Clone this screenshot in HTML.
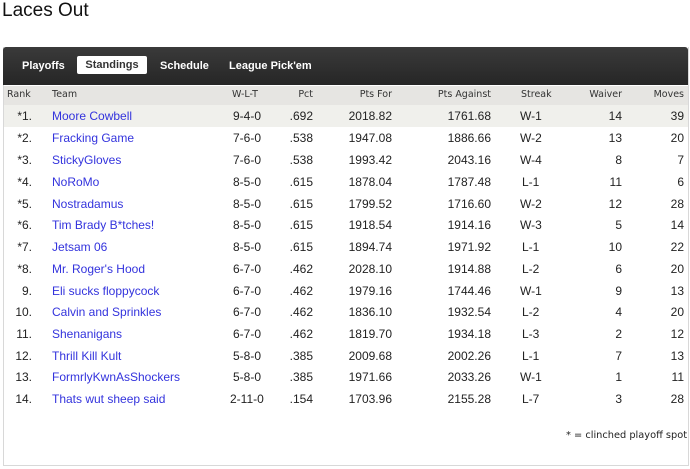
<!DOCTYPE html>
<html><head><style>
body{margin:0;width:690px;height:469px;background:#fff;font-family:"Liberation Sans",Arial,sans-serif;position:relative;overflow:hidden}
.t{position:absolute;left:2px;top:0px;font-size:19px;color:#111}
.box{position:absolute;left:3px;top:47px;width:684px;height:418px;border:1px solid #d8d8d8;border-top:none}
.nav{position:absolute;left:3px;top:47px;width:685px;height:38px;background:linear-gradient(#3a3a3a,#262626);border-radius:3px 3px 0 0}
.nav span{position:absolute;top:13px;color:#fff;font-weight:bold;font-size:11px;font-family:"Liberation Sans",Arial,sans-serif}
.nav .on{background:#fff;color:#333;top:9px;padding:3px 0;width:70px;text-align:center;border-radius:2px}
.hdr{position:absolute;left:4px;top:86px;width:684px;height:19px;background:#e6e5e2;border-bottom:1px solid #ccc}
.row{position:absolute;left:4px;width:684px;height:21px;font-size:12px;color:#222}
.c{position:absolute;top:4px;white-space:nowrap}
.hdr .c{font-family:"DejaVu Sans",Verdana,sans-serif;font-size:9.5px;color:#333;top:3px}
a{color:#3333dd;text-decoration:none}
.foot{position:absolute;left:566px;top:430px;font-family:"DejaVu Sans",Verdana,sans-serif;font-size:9.8px;color:#222;white-space:nowrap}
</style></head><body>
<div class="t">Laces Out</div>
<div class="box"></div>
<div class="nav">
<span style="left:19px">Playoffs</span>
<span class="on" style="left:74px">Standings</span>
<span style="left:157px">Schedule</span>
<span style="left:226px">League Pick'em</span>
</div>
<div class="hdr">
<span class="c" style="left:3px">Rank</span>
<span class="c" style="left:48px">Team</span>
<span class="c" style="left:228px">W-L-T</span>
<span class="c" style="right:375px">Pct</span>
<span class="c" style="right:296px">Pts For</span>
<span class="c" style="right:197px">Pts Against</span>
<span class="c" style="left:517px">Streak</span>
<span class="c" style="right:66px">Waiver</span>
<span class="c" style="right:4px">Moves</span>
</div>
<div class="row" style="top:105px;background:#f0f0ec;height:22px"><span class="c" style="right:656px">*1.</span><span class="c" style="left:48px"><a>Moore Cowbell</a></span><span class="c" style="left:229px">9-4-0</span><span class="c" style="right:375px">.692</span><span class="c" style="right:296px">2018.82</span><span class="c" style="right:197px">1761.68</span><span class="c" style="left:516px">W-1</span><span class="c" style="right:66px">14</span><span class="c" style="right:4px">39</span></div>
<div class="row" style="top:127px"><span class="c" style="right:656px">*2.</span><span class="c" style="left:48px"><a>Fracking Game</a></span><span class="c" style="left:229px">7-6-0</span><span class="c" style="right:375px">.538</span><span class="c" style="right:296px">1947.08</span><span class="c" style="right:197px">1886.66</span><span class="c" style="left:516px">W-2</span><span class="c" style="right:66px">13</span><span class="c" style="right:4px">20</span></div>
<div class="row" style="top:149px"><span class="c" style="right:656px">*3.</span><span class="c" style="left:48px"><a>StickyGloves</a></span><span class="c" style="left:229px">7-6-0</span><span class="c" style="right:375px">.538</span><span class="c" style="right:296px">1993.42</span><span class="c" style="right:197px">2043.16</span><span class="c" style="left:516px">W-4</span><span class="c" style="right:66px">8</span><span class="c" style="right:4px">7</span></div>
<div class="row" style="top:171px"><span class="c" style="right:656px">*4.</span><span class="c" style="left:48px"><a>NoRoMo</a></span><span class="c" style="left:229px">8-5-0</span><span class="c" style="right:375px">.615</span><span class="c" style="right:296px">1878.04</span><span class="c" style="right:197px">1787.48</span><span class="c" style="left:518px">L-1</span><span class="c" style="right:66px">11</span><span class="c" style="right:4px">6</span></div>
<div class="row" style="top:193px"><span class="c" style="right:656px">*5.</span><span class="c" style="left:48px"><a>Nostradamus</a></span><span class="c" style="left:229px">8-5-0</span><span class="c" style="right:375px">.615</span><span class="c" style="right:296px">1799.52</span><span class="c" style="right:197px">1716.60</span><span class="c" style="left:516px">W-2</span><span class="c" style="right:66px">12</span><span class="c" style="right:4px">28</span></div>
<div class="row" style="top:214px"><span class="c" style="right:656px">*6.</span><span class="c" style="left:48px"><a>Tim Brady B*tches!</a></span><span class="c" style="left:229px">8-5-0</span><span class="c" style="right:375px">.615</span><span class="c" style="right:296px">1918.54</span><span class="c" style="right:197px">1914.16</span><span class="c" style="left:516px">W-3</span><span class="c" style="right:66px">5</span><span class="c" style="right:4px">14</span></div>
<div class="row" style="top:236px"><span class="c" style="right:656px">*7.</span><span class="c" style="left:48px"><a>Jetsam 06</a></span><span class="c" style="left:229px">8-5-0</span><span class="c" style="right:375px">.615</span><span class="c" style="right:296px">1894.74</span><span class="c" style="right:197px">1971.92</span><span class="c" style="left:518px">L-1</span><span class="c" style="right:66px">10</span><span class="c" style="right:4px">22</span></div>
<div class="row" style="top:258px"><span class="c" style="right:656px">*8.</span><span class="c" style="left:48px"><a>Mr. Roger's Hood</a></span><span class="c" style="left:229px">6-7-0</span><span class="c" style="right:375px">.462</span><span class="c" style="right:296px">2028.10</span><span class="c" style="right:197px">1914.88</span><span class="c" style="left:518px">L-2</span><span class="c" style="right:66px">6</span><span class="c" style="right:4px">20</span></div>
<div class="row" style="top:280px"><span class="c" style="right:656px">9.</span><span class="c" style="left:48px"><a>Eli sucks floppycock</a></span><span class="c" style="left:229px">6-7-0</span><span class="c" style="right:375px">.462</span><span class="c" style="right:296px">1979.16</span><span class="c" style="right:197px">1744.46</span><span class="c" style="left:516px">W-1</span><span class="c" style="right:66px">9</span><span class="c" style="right:4px">13</span></div>
<div class="row" style="top:301px"><span class="c" style="right:656px">10.</span><span class="c" style="left:48px"><a>Calvin and Sprinkles</a></span><span class="c" style="left:229px">6-7-0</span><span class="c" style="right:375px">.462</span><span class="c" style="right:296px">1836.10</span><span class="c" style="right:197px">1932.54</span><span class="c" style="left:518px">L-2</span><span class="c" style="right:66px">4</span><span class="c" style="right:4px">20</span></div>
<div class="row" style="top:323px"><span class="c" style="right:656px">11.</span><span class="c" style="left:48px"><a>Shenanigans</a></span><span class="c" style="left:229px">6-7-0</span><span class="c" style="right:375px">.462</span><span class="c" style="right:296px">1819.70</span><span class="c" style="right:197px">1934.18</span><span class="c" style="left:518px">L-3</span><span class="c" style="right:66px">2</span><span class="c" style="right:4px">12</span></div>
<div class="row" style="top:345px"><span class="c" style="right:656px">12.</span><span class="c" style="left:48px"><a>Thrill Kill Kult</a></span><span class="c" style="left:229px">5-8-0</span><span class="c" style="right:375px">.385</span><span class="c" style="right:296px">2009.68</span><span class="c" style="right:197px">2002.26</span><span class="c" style="left:518px">L-1</span><span class="c" style="right:66px">7</span><span class="c" style="right:4px">13</span></div>
<div class="row" style="top:366px"><span class="c" style="right:656px">13.</span><span class="c" style="left:48px"><a>FormrlyKwnAsShockers</a></span><span class="c" style="left:229px">5-8-0</span><span class="c" style="right:375px">.385</span><span class="c" style="right:296px">1971.66</span><span class="c" style="right:197px">2033.26</span><span class="c" style="left:516px">W-1</span><span class="c" style="right:66px">1</span><span class="c" style="right:4px">11</span></div>
<div class="row" style="top:388px"><span class="c" style="right:656px">14.</span><span class="c" style="left:48px"><a>Thats wut sheep said</a></span><span class="c" style="left:226px">2-11-0</span><span class="c" style="right:375px">.154</span><span class="c" style="right:296px">1703.96</span><span class="c" style="right:197px">2155.28</span><span class="c" style="left:518px">L-7</span><span class="c" style="right:66px">3</span><span class="c" style="right:4px">28</span></div>
<div class="foot">* = clinched playoff spot</div>
</body></html>
